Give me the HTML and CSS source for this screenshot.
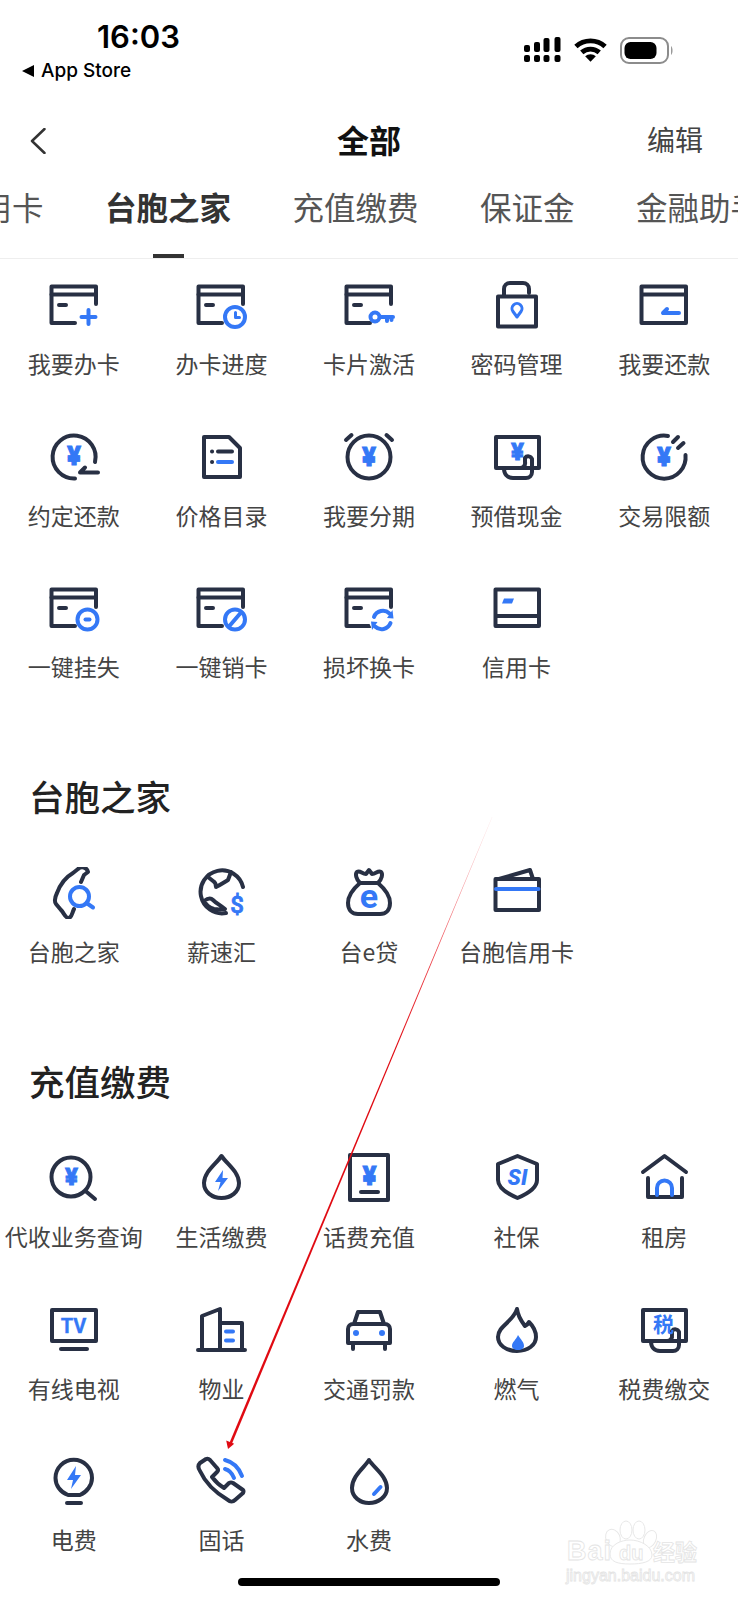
FILE: index.html
```html
<!DOCTYPE html>
<html lang="zh-CN">
<head>
  <meta charset="UTF-8" />
  <meta name="viewport" content="width=device-width, initial-scale=1.0" />
  <title>全部</title>
  <link rel="stylesheet" href="styles.css">
</head>
<body>

  <!-- icon set -->
  <svg class="defs" width="0" height="0">
    <defs>
      <g id="card-base">
        <path class="d" d="M48 25V7.5H3.5V44H27" />
        <path class="d" d="M3.5 15.5H48M11 26h7" />
      </g>
      <g id="tray-base">
        <path class="d" d="M5 6H48V37H5Z" />
        <path class="d" d="M13 37c0 6 3 10 9 10h13a6 6 0 0 0 6-6V28a4 4 0 0 0-7-1v4a5 5 0 0 1-5 6" />
      </g>
      <symbol id="i-add" viewBox="0 0 52 52"><use href="#card-base" /><path class="b" d="M40.5 31v14M33.5 38h14" /></symbol>
      <symbol id="i-progress" viewBox="0 0 52 52"><use href="#card-base" /><circle class="w" cx="40" cy="38" r="10" /><path class="b thin" d="M40.5 33.5v5h4" /></symbol>
      <symbol id="i-key" viewBox="0 0 52 52"><use href="#card-base" /><circle class="w" cx="32" cy="38" r="4.5" /><path class="b" d="M37 38H50M44 38v4M48.5 38v3" /></symbol>
      <symbol id="i-lock" viewBox="0 0 52 52">
        <path class="d" d="M13 16V10a6 6 0 0 1 6-6h13a6 6 0 0 1 6 6v4" />
        <rect class="d" x="7" y="17.5" width="38" height="30" />
        <path class="b thin" d="M26 38l-4-5.5a5 5 0 1 1 8 0z" />
      </symbol>
      <symbol id="i-repay" viewBox="0 0 52 52">
        <path class="d" d="M3.5 7.5H48V44H3.5ZM3.5 15.5H48" />
        <path class="b" d="M25 34H41M25 34l4-4" />
      </symbol>
      <symbol id="i-appoint" viewBox="0 0 52 52">
        <path class="d" d="M47 31A21.5 21.5 0 1 0 27 47.5" />
        <path class="d" d="M50 41.5H32l5-5" />
        <text class="sign" x="26" y="34">¥</text>
      </symbol>
      <symbol id="i-price" viewBox="0 0 52 52">
        <path class="d" d="M9 6H34L45 17V46H9Z" />
        <path class="d" d="M17 20.5h.1M23 20.5h14M17 31h.1" />
        <path class="b" d="M23 31h14" />
      </symbol>
      <symbol id="i-alarm" viewBox="0 0 52 52">
        <circle class="d" cx="26" cy="26" r="21.5" />
        <path class="d" d="M3 9L8.5 4M49 9L43.5 4" />
        <text class="sign" x="26" y="35">¥</text>
      </symbol>
      <symbol id="i-cash" viewBox="0 0 52 52"><use href="#tray-base" /><text class="sign small" x="26.5" y="29">¥</text></symbol>
      <symbol id="i-limit" viewBox="0 0 52 52">
        <path class="d" d="M30 5A21.5 21.5 0 1 0 47.5 24" />
        <path class="d" d="M35 11L40 6M40 17L45.5 12" />
        <text class="sign" x="26" y="35">¥</text>
      </symbol>
      <symbol id="i-lost" viewBox="0 0 52 52"><use href="#card-base" /><circle class="w" cx="39.5" cy="37.5" r="10" /><path class="b" d="M37.5 37.5h4" /></symbol>
      <symbol id="i-cancel" viewBox="0 0 52 52"><use href="#card-base" /><circle class="w" cx="40" cy="37.5" r="10" /><path class="b" d="M34 44.5L46 30.5" /></symbol>
      <symbol id="i-swap" viewBox="0 0 52 52">
        <use href="#card-base" />
        <circle class="blank" cx="39" cy="38" r="13" />
        <path class="b" d="M31 35a9.5 9.5 0 0 1 15.5-3.5M47.5 41a9.5 9.5 0 0 1-15.5 3.5" />
        <path class="fill-b" d="M44 36L50.5 36.5 49.5 28ZM34.5 40L28 39.5 29 48Z" />
      </symbol>
      <symbol id="i-credit" viewBox="0 0 52 52">
        <path class="d" d="M4.5 7.5H48V44H4.5ZM4.5 34H48" />
        <path class="fill-b" d="M13 16.5H23L21 21.5H11Z" />
      </symbol>
      <symbol id="i-island" viewBox="0 0 52 52">
        <path class="d" d="M33 15L36 8L40 5C39 0 33-1 30 2L25 6C18 10 12 18 9 26C7 30 6 34 8 37L13 43C16 46 18 52 21 51C24 50 24 46 26 42" />
        <circle class="w" cx="31.5" cy="29.5" r="9.5" />
        <path class="b" d="M38.5 36L45 40.5" />
      </symbol>
      <symbol id="i-globe" viewBox="0 0 52 52">
        <path class="d" d="M48 20A21.5 21.5 0 1 0 31 46" />
        <path class="d" d="M13 10L18 14C20 15 21 16 21 20C25 18 28 16 33 13L36 5" />
        <path class="d" d="M9 34C13 31 16 31 18 33C21 36 25 38 30 42C25 43 22 42 19 42C15 41 11 38 9 34Z" />
        <text class="sign plain" x="42" y="45.5">$</text>
      </symbol>
      <symbol id="i-bag" viewBox="0 0 52 52">
        <path class="d" d="M17 16C10 22 5 29 5 36C5 43 9 47 15 47H37C43 47 47 43 47 36C47 29 42 22 35 16Z" />
        <path class="d" d="M17 16C13 12 12 7 14 5C17 3 19 7 23 7L26 3L29 7C33 7 35 3 38 5C40 7 39 12 35 16" />
        <text class="sign big" x="26" y="41">e</text>
      </symbol>
      <symbol id="i-wallet" viewBox="0 0 52 52">
        <path class="d" d="M4.5 12H48V43H4.5ZM8 12L39 3L42 12" />
        <path class="b" d="M5 22H47.5" />
      </symbol>
      <symbol id="i-query" viewBox="0 0 52 52">
        <circle class="d" cx="23" cy="25" r="19.5" />
        <path class="d" d="M37.5 39L47 47" />
        <text class="sign small" x="23.5" y="33">¥</text>
      </symbol>
      <symbol id="i-life" viewBox="0 0 52 52">
        <path class="d" d="M26.5 4C21 12 9 20 9 31C9 40 17 46 26.5 46C36 46 44 40 44 31C44 20 32 12 26.5 4Z" />
        <path class="fill-b" d="M28 18L20 30H25.5L23 39L33 26H27.5Z" />
      </symbol>
      <symbol id="i-mobile" viewBox="0 0 52 52">
        <rect class="d" x="7" y="3" width="38" height="45" />
        <path class="d" d="M18 40H35" />
        <text class="sign" x="26.5" y="33">¥</text>
      </symbol>
      <symbol id="i-shield" viewBox="0 0 52 52">
        <path class="d" d="M26.5 4L46 12V28C46 36 36 42 26.5 46C17 42 7 36 7 28V12Z" />
        <text class="sign tilt" x="26.5" y="32.5">SI</text>
      </symbol>
      <symbol id="i-house" viewBox="0 0 52 52">
        <path class="d" d="M5 20L26.5 4L48 20M10 26V45H44V26" />
        <path class="b" d="M19 43V36a7.5 7.5 0 0 1 15 0V43" />
      </symbol>
      <symbol id="i-tv" viewBox="0 0 52 52">
        <rect class="d" x="4" y="6" width="44" height="31" />
        <path class="d" d="M13 45H39" />
        <text class="sign tv" x="25.5" y="29">TV</text>
      </symbol>
      <symbol id="i-building" viewBox="0 0 52 52">
        <path class="d" d="M3 46H50M7 46V12L25 5V46M25 19H47V46" />
        <path class="b" d="M31 27.5h7M31 36.5h7" />
      </symbol>
      <symbol id="i-car" viewBox="0 0 52 52">
        <path class="d" d="M5 25a5 5 0 0 1 5-5H42a5 5 0 0 1 5 5V39H5ZM11 20L15 8H37L41 20M10 39V45M42 39V45" />
        <circle class="fill-b" cx="13" cy="29" r="3" />
        <circle class="fill-b" cx="39" cy="29" r="3" />
      </symbol>
      <symbol id="i-flame" viewBox="0 0 52 52">
        <path class="d" d="M26 5C27 13 31 18 34 22C36 21 37 20 38 18C42 22 45 27 45 33C45 41 37 47 26 47C15 47 7 41 7 33C7 22 22 18 26 5Z" />
        <path class="fill-b" d="M27 31C30 36 33 38 33 42C33 44 31 46 27 46C23 46 21 44 21 42C21 38 25 36 27 31Z" />
      </symbol>
      <symbol id="i-tax" viewBox="0 0 52 52"><use href="#tray-base" /><text class="sign cjk" x="25.5" y="28">税</text></symbol>
      <symbol id="i-power" viewBox="0 0 52 52">
        <path class="d" d="M20 40C12 37 7.5 30 7.5 23A18 18 0 1 1 44 23C44 30 39 37 32 40H20ZM19 48H33" />
        <path class="fill-b" d="M28 11L19 25H25L23 34L33 20H27Z" />
      </symbol>
      <symbol id="i-phone" viewBox="0 0 52 52">
        <path class="d" d="M11 4L5 8C3 10 3 13 5 16C10 27 21 38 33 45C35 47 38 47 40 45L48 38Q49 36 48 35L38 28Q36 27 34 28L29 33C24 30 20 26 17 22L22 17Q24 15 22 13L15 5Q13 3 11 4Z" />
        <path class="b" d="M30 5C38 7 44 13 47 21M30 14C34 15 37 18 39 23" />
      </symbol>
      <symbol id="i-water" viewBox="0 0 52 52">
        <path class="d" d="M26 5C21 13 9 21 9 33C9 42 17 48 26 48C35 48 44 42 44 33C44 21 31 13 26 5Z" />
        <path class="b" d="M31 39L37.5 32" />
      </symbol>
    </defs>
  </svg>

  <header class="status">
    <div class="status-left">
      <div class="time">16:03</div>
      <div class="back-app"><span class="tri"></span>App Store</div>
    </div>
    <div class="status-right">
      <svg class="signal" width="37" height="25" viewBox="0 0 37 25">
        <rect x="0" y="8" width="6" height="7" rx="2" />
        <rect x="10" y="5" width="6" height="10" rx="2" />
        <rect x="19.5" y="1" width="6" height="14" rx="2" />
        <rect x="30.5" y="0" width="6" height="15" rx="2" />
        <rect x="0" y="18" width="6" height="7" rx="2" />
        <rect x="10" y="18" width="6" height="7" rx="2" />
        <rect x="19.5" y="18" width="6" height="7" rx="2" />
        <rect x="30.5" y="18" width="6" height="7" rx="2" />
      </svg>
      <svg class="wifi" width="33" height="25" viewBox="0 0 34 25">
        <path d="M2 9.5A22 22 0 0 1 32 9.5M8 15.5A13.5 13.5 0 0 1 26 15.5" />
        <path class="wifi-dot" d="M17 25L11.5 19.5A8 8 0 0 1 22.5 19.5Z" />
      </svg>
      <svg class="battery" width="54" height="27" viewBox="0 0 54 27">
        <rect class="battery-box" x="1" y="1" width="47" height="25" rx="8" />
        <rect x="4.5" y="5" width="32" height="17" rx="6" />
        <path class="battery-nub" d="M51 9c2 1 2 8 0 9Z" />
      </svg>
    </div>
  </header>

  <nav class="topnav">
    <div class="topnav-side">
      <svg class="chevron" width="16" height="26" viewBox="0 0 16 26"><path d="M14.5 1L2 13L14.5 25" /></svg>
    </div>
    <div class="topnav-title">全部</div>
    <div class="topnav-side topnav-edit">编辑</div>
  </nav>

  <div class="tabs">
    <div class="tab tab-first">信用卡</div>
    <div class="tab active">台胞之家</div>
    <div class="tab">充值缴费</div>
    <div class="tab">保证金</div>
    <div class="tab">金融助手</div>
  </div>

  <main>
    <section class="first">
      <div class="grid">
        <div class="item"><svg class="ico"><use href="#i-add" /></svg><span>我要办卡</span></div>
        <div class="item"><svg class="ico"><use href="#i-progress" /></svg><span>办卡进度</span></div>
        <div class="item"><svg class="ico"><use href="#i-key" /></svg><span>卡片激活</span></div>
        <div class="item"><svg class="ico"><use href="#i-lock" /></svg><span>密码管理</span></div>
        <div class="item"><svg class="ico"><use href="#i-repay" /></svg><span>我要还款</span></div>
        <div class="item"><svg class="ico"><use href="#i-appoint" /></svg><span>约定还款</span></div>
        <div class="item"><svg class="ico"><use href="#i-price" /></svg><span>价格目录</span></div>
        <div class="item"><svg class="ico"><use href="#i-alarm" /></svg><span>我要分期</span></div>
        <div class="item"><svg class="ico"><use href="#i-cash" /></svg><span>预借现金</span></div>
        <div class="item"><svg class="ico"><use href="#i-limit" /></svg><span>交易限额</span></div>
        <div class="item"><svg class="ico"><use href="#i-lost" /></svg><span>一键挂失</span></div>
        <div class="item"><svg class="ico"><use href="#i-cancel" /></svg><span>一键销卡</span></div>
        <div class="item"><svg class="ico"><use href="#i-swap" /></svg><span>损坏换卡</span></div>
        <div class="item"><svg class="ico"><use href="#i-credit" /></svg><span>信用卡</span></div>
      </div>
    </section>

    <section>
      <h2>台胞之家</h2>
      <div class="grid">
        <div class="item"><svg class="ico"><use href="#i-island" /></svg><span>台胞之家</span></div>
        <div class="item"><svg class="ico"><use href="#i-globe" /></svg><span>薪速汇</span></div>
        <div class="item"><svg class="ico"><use href="#i-bag" /></svg><span>台e贷</span></div>
        <div class="item"><svg class="ico"><use href="#i-wallet" /></svg><span>台胞信用卡</span></div>
      </div>
    </section>

    <section>
      <h2>充值缴费</h2>
      <div class="grid">
        <div class="item"><svg class="ico"><use href="#i-query" /></svg><span>代收业务查询</span></div>
        <div class="item"><svg class="ico"><use href="#i-life" /></svg><span>生活缴费</span></div>
        <div class="item"><svg class="ico"><use href="#i-mobile" /></svg><span>话费充值</span></div>
        <div class="item"><svg class="ico"><use href="#i-shield" /></svg><span>社保</span></div>
        <div class="item"><svg class="ico"><use href="#i-house" /></svg><span>租房</span></div>
        <div class="item"><svg class="ico"><use href="#i-tv" /></svg><span>有线电视</span></div>
        <div class="item"><svg class="ico"><use href="#i-building" /></svg><span>物业</span></div>
        <div class="item"><svg class="ico"><use href="#i-car" /></svg><span>交通罚款</span></div>
        <div class="item"><svg class="ico"><use href="#i-flame" /></svg><span>燃气</span></div>
        <div class="item"><svg class="ico"><use href="#i-tax" /></svg><span>税费缴交</span></div>
        <div class="item"><svg class="ico"><use href="#i-power" /></svg><span>电费</span></div>
        <div class="item"><svg class="ico"><use href="#i-phone" /></svg><span>固话</span></div>
        <div class="item"><svg class="ico"><use href="#i-water" /></svg><span>水费</span></div>
      </div>
    </section>
  </main>

  <div class="home-bar"></div>

  <!-- marks drawn over the screenshot -->
  <svg class="arrow" width="738" height="1600" viewBox="0 0 738 1600">
    <defs>
      <linearGradient id="fade" gradientUnits="userSpaceOnUse" x1="492" y1="817" x2="300" y2="1280">
        <stop offset="0" stop-color="#e8101a" stop-opacity="0.1" />
        <stop offset="0.3" stop-color="#e8101a" stop-opacity="0.8" />
        <stop offset="0.5" stop-color="#e00a12" />
      </linearGradient>
    </defs>
    <path fill="url(#fade)" d="M492 817L492.3 817L232 1443.5L229.6 1442.5Z" />
    <path fill="#e00a12" d="M228 1449L226.2 1440.5L234.2 1443.8Z" />
  </svg>

  <svg class="watermark" width="150" height="80" viewBox="0 0 150 80">
    <g class="paw">
      <ellipse cx="53" cy="28" rx="7" ry="9" transform="rotate(-25 53 28)" />
      <ellipse cx="66" cy="20" rx="6" ry="9" />
      <ellipse cx="79" cy="20" rx="6" ry="9" />
      <ellipse cx="90" cy="29" rx="6" ry="9" transform="rotate(25 90 29)" />
      <path d="M50 44C50 34 62 30 70 30C80 30 92 36 92 45C92 52 82 54 70 54C58 54 50 52 50 44Z" />
    </g>
    <text class="wm-big" x="7" y="50">Bai</text>
    <text class="wm-du" x="59" y="50">du</text>
    <text class="wm-cn" x="93" y="50">经验</text>
    <text class="wm-url" x="6" y="71">jingyan.baidu.com</text>
  </svg>

</body>
</html>
```

FILE: styles.css
```css
:root {
  --navy: #283044;
  --azul: #3478f6;
  --texto: #444444;
  --titulo: #222222;
}

* {
  box-sizing: border-box;
}

body {
  margin: 0;
  width: 738px;
  height: 1600px;
  overflow: hidden;
  position: relative;
  background-color: #ffffff;
  color: var(--texto);
  font-family: "Noto Sans CJK SC", "Noto Sans", sans-serif;
}

.defs {
  position: absolute;
}

/* status bar */
.status {
  height: 112px;
  display: flex;
  justify-content: space-between;
  color: #000000;
}

.status-left {
  padding: 20px 0 0 22px;
}

.time {
  margin-left: 75px;
  font-family: Inter, sans-serif;
  font-size: 31px;
  font-weight: 600;
  line-height: 34px;
}

.back-app {
  margin-top: 5px;
  display: flex;
  align-items: center;
  gap: 7px;
  font-family: Inter, sans-serif;
  font-size: 19px;
  font-weight: 500;
  line-height: 24px;
}

.tri {
  width: 0;
  height: 0;
  border-top: 6px solid transparent;
  border-bottom: 6px solid transparent;
  border-right: 12px solid #000000;
}

.status-right {
  padding: 37px 64px 0 0;
  display: flex;
  align-items: flex-start;
  gap: 13px;
}

.wifi {
  fill: none;
  stroke: #000000;
  stroke-width: 5;
}

.wifi-dot {
  fill: #000000;
  stroke: none;
}

.battery-box {
  fill: none;
  stroke: #8c8c8c;
  stroke-width: 2;
}

.battery-nub {
  fill: #9a9a9a;
}

/* nav */
.topnav {
  height: 60px;
  padding: 0 35px 2px 30px;
  display: flex;
  align-items: center;
}

.topnav-side {
  flex: 1;
  display: flex;
  align-items: center;
}

.topnav-edit {
  justify-content: flex-end;
  margin-bottom: 4px;
  font-size: 28px;
  color: #444444;
}

.topnav-title {
  margin: 0 0 4px 5px;
  font-size: 32px;
  font-weight: 700;
  color: #111111;
}

.chevron {
  fill: none;
  stroke: #333333;
  stroke-width: 2.5;
  stroke-linecap: round;
  stroke-linejoin: round;
}

/* tabs */
.tabs {
  height: 87px;
  padding-bottom: 19px;
  display: flex;
  align-items: center;
  gap: 61.5px;
  overflow: hidden;
  border-bottom: 1px solid #eeeeee;
  font-size: 31.5px;
  color: #555555;
  white-space: nowrap;
}

.tab {
  flex-shrink: 0;
  position: relative;
}

.tab-first {
  margin-left: -51px;
}

.tab.active {
  font-weight: 700;
  color: #333333;
}

.tab.active::after {
  content: "";
  position: absolute;
  left: 47.5px;
  bottom: -29px;
  width: 31px;
  height: 4px;
  background-color: #333333;
}

/* grids */
section {
  margin-top: 93px;
}

section.first {
  margin-top: 20px;
}

h2 {
  margin: 0 0 49px;
  padding-left: 29px;
  height: 44px;
  font-size: 35.5px;
  font-weight: 500;
  line-height: 44px;
  color: var(--titulo);
}

.grid {
  display: grid;
  grid-template-columns: repeat(5, 1fr);
  row-gap: 52.5px;
}

.item {
  display: flex;
  flex-direction: column;
  align-items: center;
  gap: 17px;
  font-size: 23px;
  line-height: 30px;
  white-space: nowrap;
}

.ico {
  width: 52px;
  height: 52px;
  overflow: visible;
}

/* icon strokes */
.d,
.b,
.w {
  fill: none;
  stroke-width: 4;
  stroke-linecap: round;
  stroke-linejoin: round;
}

.d {
  stroke: var(--navy);
}

.b,
.w {
  stroke: var(--azul);
}

.w {
  fill: #ffffff;
}

.thin {
  stroke-width: 3;
}

.blank {
  fill: #ffffff;
}

.fill-b {
  fill: var(--azul);
}

.sign {
  fill: var(--azul);
  stroke: var(--azul);
  stroke-width: 0.8;
  font-family: Roboto, sans-serif;
  font-size: 26px;
  font-weight: 900;
  text-anchor: middle;
}

.sign.small {
  font-size: 24px;
}

.sign.plain {
  font-size: 24px;
  font-weight: 500;
}

.sign.big {
  font-size: 34px;
  font-weight: 700;
  stroke: none;
}

.sign.tilt {
  font-size: 22px;
  font-style: italic;
  stroke: none;
}

.sign.tv {
  font-size: 20px;
  font-weight: 700;
  stroke-width: 0.3;
}

.sign.cjk {
  font-family: "Noto Sans CJK SC", sans-serif;
  font-size: 21px;
  font-weight: 700;
  stroke: none;
}

.home-bar {
  position: absolute;
  left: 238px;
  top: 1578px;
  width: 262px;
  height: 8px;
  border-radius: 4px;
  background-color: #000000;
}

.arrow {
  position: absolute;
  top: 0;
  left: 0;
}

.watermark {
  position: absolute;
  left: 560px;
  top: 1510px;
}

.paw {
  fill: #ffffff;
  stroke: #e8e8e8;
  stroke-width: 1;
}

.watermark text {
  fill: #ffffff;
  stroke: #e4e4e4;
  stroke-width: 0.8;
}

.wm-big {
  font-family: "Liberation Sans", sans-serif;
  font-size: 27px;
  font-weight: 700;
  letter-spacing: 1px;
}

.wm-du {
  font-family: "Liberation Sans", sans-serif;
  font-size: 20px;
  font-weight: 700;
}

.wm-cn {
  font-size: 22px;
  font-weight: 700;
}

.wm-url {
  font-family: "Liberation Sans", sans-serif;
  font-size: 16px;
}
```
